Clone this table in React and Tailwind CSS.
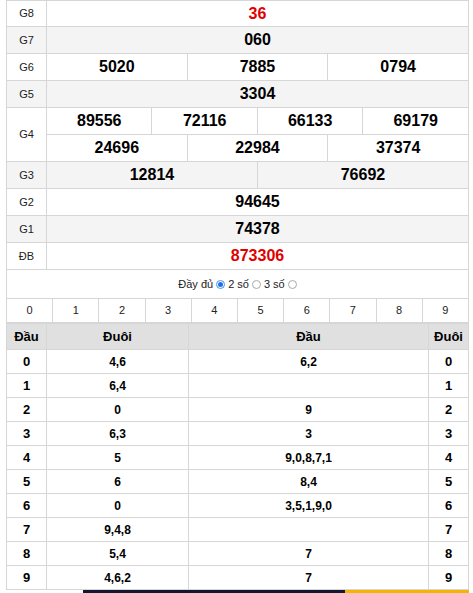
const font = { fontFamily: '"Liberation Sans", Arial, sans-serif' };

const loto = [
  ["0", "4,6", "6,2", "0"],
  ["1", "6,4", "", "1"],
  ["2", "0", "9", "2"],
  ["3", "6,3", "3", "3"],
  ["4", "5", "9,0,8,7,1", "4"],
  ["5", "6", "8,4", "5"],
  ["6", "0", "3,5,1,9,0", "6"],
  ["7", "9,4,8", "", "7"],
  ["8", "5,4", "7", "8"],
  ["9", "4,6,2", "7", "9"],
];

function Label({ children, rowSpan }) {
  return (
    <td
      rowSpan={rowSpan}
      className="w-[40px] border border-[#d6d6d6] text-center text-[11px] text-[#222]"
    >
      {children}
    </td>
  );
}

function Num({ children, colSpan, red }) {
  return (
    <td
      colSpan={colSpan}
      className={`border border-[#d6d6d6] text-center text-[16px] font-bold ${red ? "text-[#e00000]" : "text-black"}`}
    >
      {children}
    </td>
  );
}

export default function App() {
  return (
    <div className="w-[473px] h-[593px] overflow-hidden bg-white" style={font}>
      <div className="ml-[6px] w-[463px]">
        <table className="w-full table-fixed border-collapse">
          <colgroup>
            <col className="w-[40px]" />
            {Array.from({ length: 12 }).map((_, i) => (
              <col key={i} />
            ))}
          </colgroup>
          <tbody>
            <tr className="h-[26px]">
              <Label>G8</Label>
              <Num colSpan={12} red>36</Num>
            </tr>
            <tr className="h-[27px] bg-[#f4f4f4]">
              <Label>G7</Label>
              <Num colSpan={12}>060</Num>
            </tr>
            <tr className="h-[27px]">
              <Label>G6</Label>
              <Num colSpan={4}>5020</Num>
              <Num colSpan={4}>7885</Num>
              <Num colSpan={4}>0794</Num>
            </tr>
            <tr className="h-[27px] bg-[#f4f4f4]">
              <Label>G5</Label>
              <Num colSpan={12}>3304</Num>
            </tr>
            <tr className="h-[27px]">
              <Label rowSpan={2}>G4</Label>
              <Num colSpan={3}>89556</Num>
              <Num colSpan={3}>72116</Num>
              <Num colSpan={3}>66133</Num>
              <Num colSpan={3}>69179</Num>
            </tr>
            <tr className="h-[27px]">
              <Num colSpan={4}>24696</Num>
              <Num colSpan={4}>22984</Num>
              <Num colSpan={4}>37374</Num>
            </tr>
            <tr className="h-[27px] bg-[#f4f4f4]">
              <Label>G3</Label>
              <Num colSpan={6}>12814</Num>
              <Num colSpan={6}>76692</Num>
            </tr>
            <tr className="h-[27px]">
              <Label>G2</Label>
              <Num colSpan={12}>94645</Num>
            </tr>
            <tr className="h-[27px] bg-[#f4f4f4]">
              <Label>G1</Label>
              <Num colSpan={12}>74378</Num>
            </tr>
            <tr className="h-[27px]">
              <Label>ĐB</Label>
              <Num colSpan={12} red>873306</Num>
            </tr>
          </tbody>
        </table>

        <div className="flex h-[28px] items-center justify-center gap-[3px] border-x border-[#d6d6d6] text-[11px] text-[#222]">
          <span>Đầy đủ</span>
          <span className="flex h-[9px] w-[9px] items-center justify-center rounded-full border border-[#4a90e2] bg-white">
            <span className="h-[5px] w-[5px] rounded-full bg-[#1a73e8]" />
          </span>
          <span>2 số</span>
          <span className="h-[9px] w-[9px] rounded-full border border-[#aaa] bg-white" />
          <span>3 số</span>
          <span className="h-[9px] w-[9px] rounded-full border border-[#aaa] bg-white" />
        </div>

        <table className="w-full table-fixed border-collapse">
          <tbody>
            <tr className="h-[24px]">
              {Array.from({ length: 10 }).map((_, i) => (
                <td
                  key={i}
                  className="border border-[#d6d6d6] text-center text-[11px] text-[#222]"
                >
                  {i}
                </td>
              ))}
            </tr>
          </tbody>
        </table>

        <table className="w-full table-fixed border-collapse">
          <colgroup>
            <col className="w-[40px]" />
            <col className="w-[142px]" />
            <col />
            <col className="w-[40px]" />
          </colgroup>
          <thead>
            <tr className="h-[26px] bg-[#e0e0e0] text-[13px] font-bold text-black">
              <th className="border border-[#d6d6d6]">Đầu</th>
              <th className="border border-[#d6d6d6]">Đuôi</th>
              <th className="border border-[#d6d6d6]">Đầu</th>
              <th className="border border-[#d6d6d6]">Đuôi</th>
            </tr>
          </thead>
          <tbody>
            {loto.map((r) => (
              <tr key={r[0]} className="h-[24px] text-[12px] font-bold text-black">
                {r.map((c, j) => (
                  <td
                    key={j}
                    className={`border border-[#d6d6d6] text-center ${j === 0 || j === 3 ? "text-[13px]" : ""}`}
                  >
                    {c}
                  </td>
                ))}
              </tr>
            ))}
          </tbody>
        </table>
      </div>
      <div className="flex h-[3px]">
        <div className="w-[83px]" />
        <div className="w-[262px] bg-[#141630]" />
        <div className="w-[124px] bg-[#f5b400]" />
      </div>
    </div>
  );
}
